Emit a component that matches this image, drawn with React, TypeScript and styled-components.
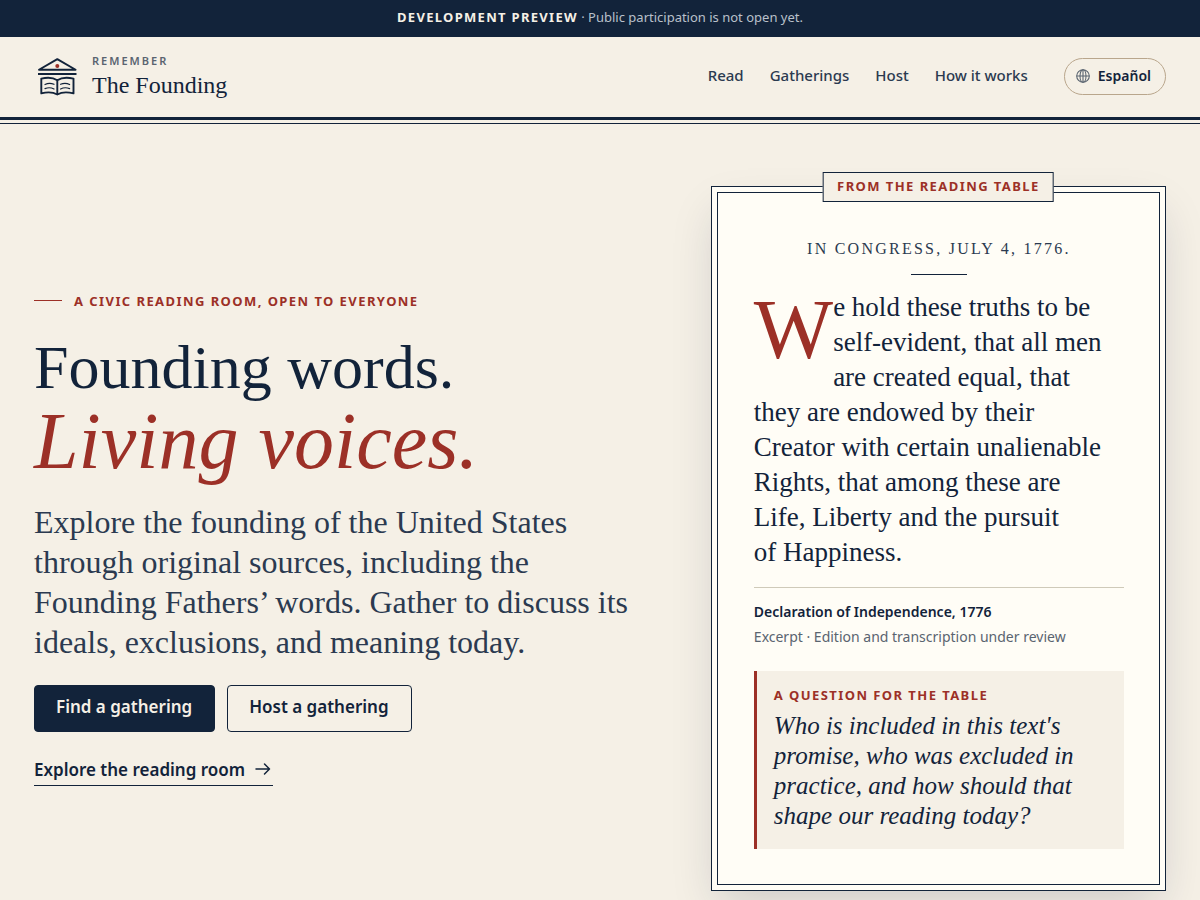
import React from "react";
import styled, { createGlobalStyle } from "styled-components";

const navy = "#12233a";
const ink = "#2b3a50";
const muted = "#5a6470";
const red = "#9c3027";
const paper = "#f5f0e6";
const ivory = "#fffdf6";
const sans = '"Noto Sans", "Open Sans", sans-serif';
const serif = '"Liberation Serif", "Times New Roman", serif';

const GlobalStyle = createGlobalStyle`
  *, *::before, *::after { box-sizing: border-box; }
  body {
    margin: 0;
    background: ${paper};
    color: ${navy};
    font-family: ${sans};
  }
  p, h1 { margin: 0; }
  a { color: inherit; text-decoration: none; }
`;

const Banner = styled.div`
  padding: 7px 34px 9px;
  background: ${navy};
  color: #b9c0ca;
  font-size: 13px;
  line-height: 21px;
  text-align: center;

  strong {
    color: ${paper};
    font-weight: 700;
    letter-spacing: 0.1em;
  }
`;

const Header = styled.header`
  display: flex;
  align-items: center;
  justify-content: space-between;
  gap: 24px;
  height: 83px;
  padding: 0 34px 2px;
  border-bottom: 3px solid ${navy};
`;

const HeaderRule = styled.div`
  height: 4px;
  border-bottom: 1px solid ${navy};
`;

const Brand = styled.a`
  display: flex;
  align-items: center;
  gap: 12px;
`;

const BrandName = styled.span`
  display: flex;
  flex-direction: column;
  gap: 2px;
  font-family: ${serif};
  font-size: 24px;
  line-height: 28px;

  small {
    color: ${muted};
    font-family: ${sans};
    font-size: 11px;
    font-weight: 600;
    line-height: 16px;
    letter-spacing: 2px;
  }
`;

const HeaderActions = styled.div`
  display: flex;
  align-items: center;
  gap: 36px;
`;

const Nav = styled.nav`
  display: flex;
  gap: 26px;
  padding-bottom: 2px;
  color: ${ink};
  font-size: 15px;
  font-weight: 500;
  line-height: 24px;
`;

const LanguageButton = styled.button`
  display: flex;
  align-items: center;
  gap: 8px;
  height: 37px;
  padding: 0 14px 0 11px;
  border: 1px solid #b9a68c;
  border-radius: 19px;
  background: transparent;
  color: ${navy};
  font: 600 14px/20px ${sans};
  cursor: pointer;
`;

const Hero = styled.main`
  display: grid;
  grid-template-columns: 4fr 3fr;
  align-items: center;
  gap: 70px;
  padding: 62px 34px;
`;

const Intro = styled.section`
  display: flex;
  flex-direction: column;
  align-items: flex-start;
`;

const Label = styled.p`
  display: flex;
  align-items: center;
  gap: 12px;
  color: ${red};
  font-size: 13px;
  font-weight: 700;
  line-height: 18px;
  letter-spacing: 0.11em;
  text-transform: uppercase;
`;

const Dash = styled.span`
  width: 28px;
  height: 1px;
  background: ${red};
`;

const Title = styled.h1`
  margin-top: 20px;
  font-family: ${serif};
  font-size: 62px;
  font-weight: 400;
  line-height: 74px;

  em {
    display: block;
    color: ${red};
    font-size: 80px;
  }
`;

const Lead = styled.p`
  margin-top: 24px;
  color: ${ink};
  font-family: ${serif};
  font-size: 32px;
  line-height: 40px;
`;

const Actions = styled.div`
  display: flex;
  flex-wrap: wrap;
  gap: 12px;
  margin-top: 23px;
`;

const Action = styled.button<{ $primary?: boolean }>`
  height: 47px;
  padding: 0 22px 2px 21px;
  border: 1px solid ${navy};
  border-radius: 4px;
  background: ${(p) => (p.$primary ? navy : "transparent")};
  color: ${(p) => (p.$primary ? paper : navy)};
  font: 600 17px/24px ${sans};
  cursor: pointer;
`;

const TextLink = styled.a`
  display: flex;
  align-items: center;
  gap: 8px;
  margin-top: 25px;
  padding-bottom: 3px;
  border-bottom: 1px solid ${navy};
  font-size: 17px;
  font-weight: 600;
  line-height: 25px;
`;

const Sheet = styled.article`
  position: relative;
  padding: 5px;
  border: 1px solid ${navy};
  background: ${ivory};
  box-shadow: 0 20px 44px -8px rgba(20, 35, 59, 0.18);
`;

const SheetTag = styled.span`
  position: absolute;
  top: -15px;
  left: 50%;
  transform: translateX(-50%);
  padding: 4px 13px 6px;
  border: 1px solid ${navy};
  background: ${paper};
  color: ${red};
  font-size: 13px;
  font-weight: 700;
  line-height: 18px;
  letter-spacing: 0.11em;
  text-transform: uppercase;
  white-space: nowrap;
`;

const SheetBody = styled.div`
  padding: 44px 35px 35px 36px;
  border: 1px solid ${navy};
`;

const Dateline = styled.p`
  color: ${ink};
  font-family: ${serif};
  font-size: 16px;
  line-height: 24px;
  letter-spacing: 0.14em;
  text-align: center;

  &::after {
    content: "";
    display: block;
    width: 56px;
    height: 1px;
    margin: 13px auto 0;
    background: ${navy};
  }
`;

const Quote = styled.blockquote`
  margin: 15px 0 0;
  padding-right: 10px;
  font-family: ${serif};
  font-size: 27px;
  line-height: 35px;

  &::first-letter {
    float: left;
    color: ${red};
    font-size: 84px;
    line-height: 80px;
  }
`;

const Source = styled.p`
  margin-top: 17px;
  padding-top: 11px;
  border-top: 1px solid #cfcab9;
  color: ${muted};
  font-size: 14px;
  line-height: 25px;

  strong {
    display: block;
    color: ${navy};
    font-weight: 600;
  }
`;

const Question = styled.aside`
  margin-top: 22px;
  padding: 15px 17px 18px;
  border-left: 3px solid ${red};
  background: ${paper};
`;

const QuestionText = styled.p`
  margin-top: 7px;
  font-family: ${serif};
  font-size: 25px;
  font-style: italic;
  line-height: 30px;
`;

const Logo = () => (
  <svg width="46" height="46" viewBox="0 -1 46 46" fill="none" stroke={navy} strokeWidth="1.9" aria-hidden="true">
    <path d="M5 15.8 23.3 5.1 41.6 15.8Z" strokeLinejoin="round" />
    <path d="M4 19.9H42.5" strokeWidth="2" />
    <circle cx="23.3" cy="12" r="2" fill={red} stroke="none" />
    <path d="M23.3 26.2C19 23.4 12.5 23.4 7.3 24.6V39.4C12.5 38 19 38 23.3 40.5C27.6 38 34.1 38 39.5 39.4V24.6C34.1 23.4 27.6 23.4 23.3 26.2Z" strokeLinejoin="round" />
    <path d="M23.3 26.2V40.5" />
    <path d="M11 30.5C14 28.9 17 28.9 20 30.3M11 34.6C14 33.4 17 33.4 20 35M35.6 30.5C32.6 28.9 29.6 28.9 26.6 30.3M35.6 34.6C32.6 33.4 29.6 33.4 26.6 35" strokeWidth="1.2" strokeLinecap="round" />
  </svg>
);

const Globe = () => (
  <svg width="14" height="14" viewBox="0 0 14 14" fill="none" stroke={muted} strokeWidth="1.1" aria-hidden="true">
    <circle cx="7" cy="7" r="6.3" />
    <ellipse cx="7" cy="7" rx="3" ry="6.3" />
    <path d="M0.7 7H13.3M7 0.7V13.3" />
  </svg>
);

const Arrow = () => (
  <svg width="20" height="16" viewBox="0 0 20 16" fill="none" stroke={navy} strokeWidth="1.5" strokeLinecap="round" strokeLinejoin="round" aria-hidden="true">
    <path d="M3 8H16.5M11.5 3 16.5 8 11.5 13" />
  </svg>
);

export default function App() {
  return (
    <>
      <GlobalStyle />
      <Banner>
        <strong>DEVELOPMENT PREVIEW</strong> · Public participation is not open yet.
      </Banner>
      <Header>
        <Brand href="#home">
          <Logo />
          <BrandName>
            <small>REMEMBER</small>
            The Founding
          </BrandName>
        </Brand>
        <HeaderActions>
          <Nav>
            <a href="#read">Read</a>
            <a href="#gatherings">Gatherings</a>
            <a href="#host">Host</a>
            <a href="#how">How it works</a>
          </Nav>
          <LanguageButton type="button">
            <Globe />
            Español
          </LanguageButton>
        </HeaderActions>
      </Header>
      <HeaderRule />
      <Hero>
        <Intro>
          <Label>
            <Dash />A civic reading room, open to everyone
          </Label>
          <Title>
            Founding words. <em>Living voices.</em>
          </Title>
          <Lead>
            Explore the founding of the United States through original sources, including the
            Founding Fathers’ words. Gather to discuss its ideals, exclusions, and meaning today.
          </Lead>
          <Actions>
            <Action type="button" $primary>Find a gathering</Action>
            <Action type="button">Host a gathering</Action>
          </Actions>
          <TextLink href="#reading-room">
            Explore the reading room
            <Arrow />
          </TextLink>
        </Intro>
        <Sheet>
          <SheetTag>From the reading table</SheetTag>
          <SheetBody>
            <Dateline>IN CONGRESS, JULY 4, 1776.</Dateline>
            <Quote>
              We hold these truths to be self-evident, that all men are created equal, that they
              are endowed by their Creator with certain unalienable Rights, that among these are
              Life, Liberty and the pursuit of&nbsp;Happiness.
            </Quote>
            <Source>
              <strong>Declaration of Independence, 1776</strong>
              Excerpt · Edition and transcription under review
            </Source>
            <Question>
              <Label>A question for the table</Label>
              <QuestionText>
                Who is included in this text's promise, who was excluded in practice, and how
                should that shape our reading today?
              </QuestionText>
            </Question>
          </SheetBody>
        </Sheet>
      </Hero>
    </>
  );
}
